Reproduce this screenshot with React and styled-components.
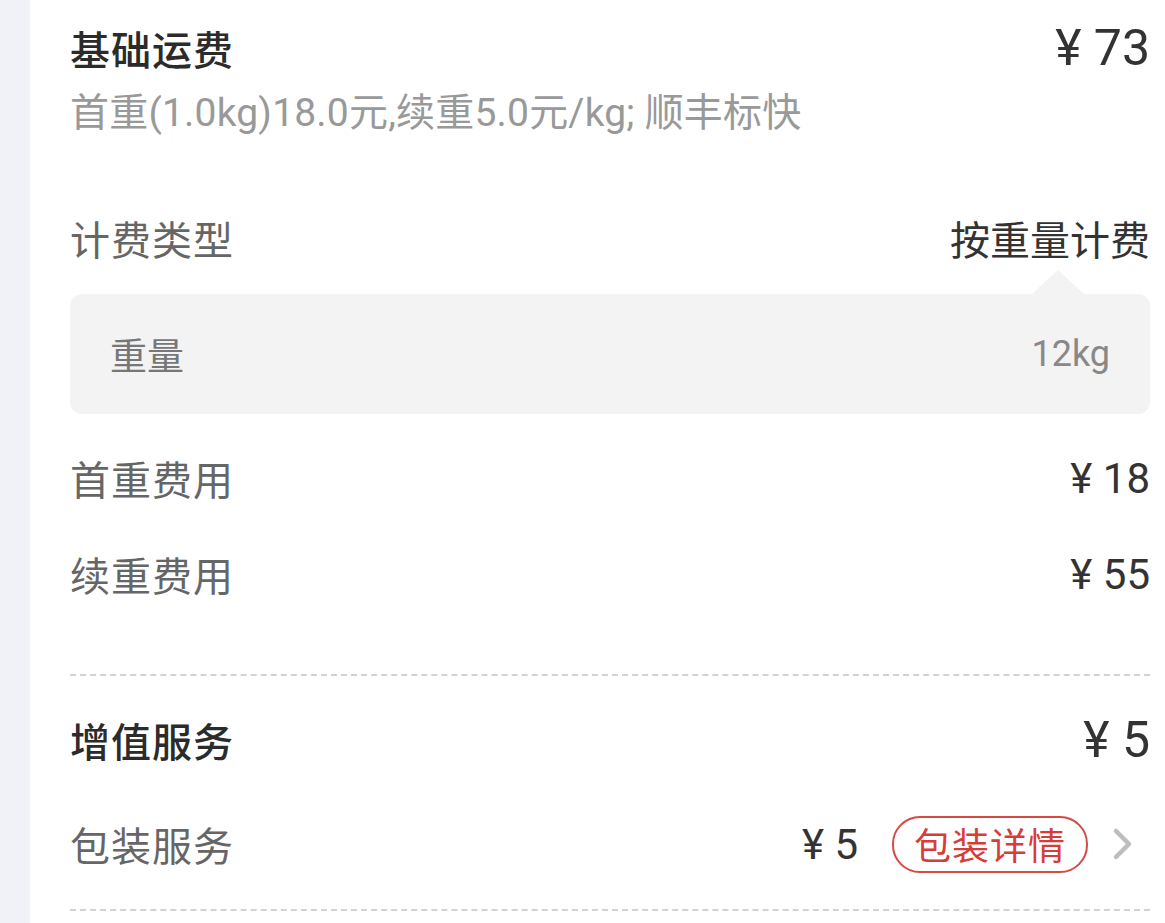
import React from "react";
import styled, { createGlobalStyle } from "styled-components";

const GlobalStyle = createGlobalStyle`
  html, body {
    margin: 0;
    padding: 0;
    background: #ffffff;
  }
  body {
    font-family: "Roboto", "Noto Sans CJK SC", sans-serif;
  }
`;

const Page = styled.div`
  display: flex;
  min-height: 923px;
`;

const SideStrip = styled.div`
  flex: 0 0 30px;
  background: #f0f2f7;
`;

const Content = styled.div`
  flex: 1;
  padding: 20px 15px 0 40px;
  display: flex;
  flex-direction: column;
`;

const Row = styled.div`
  display: flex;
  align-items: center;
  justify-content: space-between;
  height: ${(p) => p.$h || 96}px;
`;

const Title = styled.div`
  font-size: 40px;
  font-weight: 500;
  color: #2b2b2b;
  letter-spacing: 1px;
`;

const SubText = styled.div`
  font-size: 39px;
  letter-spacing: 0.2px;
  color: #999999;
  line-height: 50px;
  height: 50px;
  margin: 12px 0 52px;
`;

const Label = styled.div`
  font-size: 40px;
  color: #666666;
  letter-spacing: 1px;
`;

const Value = styled.div`
  font-size: ${(p) => p.$size || 40}px;
  color: ${(p) => p.$color || "#333333"};
  white-space: pre;
`;

const WeightBox = styled.div`
  position: relative;
  margin-top: 8px;
  height: 120px;
  background: #f3f3f3;
  border-radius: 12px;
  display: flex;
  align-items: center;
  justify-content: space-between;
  padding: 0 40px;
  margin-bottom: 16px;

  &::before {
    content: "";
    position: absolute;
    top: -24px;
    right: 66px;
    border-left: 26px solid transparent;
    border-right: 26px solid transparent;
    border-bottom: 24px solid #f3f3f3;
  }
`;

const BoxLabel = styled.div`
  font-size: 37px;
  color: #777777;
`;

const BoxValue = styled.div`
  font-size: 36px;
  color: #888888;
`;

const Dashed = styled.div`
  border-top: 2px dashed #d2d2d2;
  margin: ${(p) => p.$m || "0"};
`;

const RightGroup = styled.div`
  display: flex;
  align-items: center;
`;

const Pill = styled.div`
  margin-left: 34px;
  height: 53px;
  padding: 0 20px;
  border: 2px solid #d44a45;
  border-radius: 28px;
  display: flex;
  align-items: center;
  font-size: 37px;
  color: #d63d39;
  letter-spacing: 1px;
`;

const Chevron = styled.svg`
  margin-left: 24px;
  margin-right: 16px;
  width: 22px;
  height: 34px;
`;

export default function App() {
  return (
    <>
      <GlobalStyle />
      <Page>
        <SideStrip />
        <Content>
          <Row $h={56}>
            <Title>基础运费</Title>
            <Value $size={50}>¥ 73</Value>
          </Row>
          <SubText>首重(1.0kg)18.0元,续重5.0元/kg; 顺丰标快</SubText>

          <Row>
            <Label>计费类型</Label>
            <Value>按重量计费</Value>
          </Row>
          <WeightBox>
            <BoxLabel>重量</BoxLabel>
            <BoxValue>12kg</BoxValue>
          </WeightBox>

          <Row>
            <Label>首重费用</Label>
            <Value $size={42}>¥ 18</Value>
          </Row>
          <Row>
            <Label>续重费用</Label>
            <Value $size={42}>¥ 55</Value>
          </Row>

          <Dashed $m="52px 0 19px" />

          <Row $h={90}>
            <Title>增值服务</Title>
            <Value $size={50}>¥ 5</Value>
          </Row>
          <Row $h={118}>
            <Label>包装服务</Label>
            <RightGroup>
              <Value $size={42}>¥ 5</Value>
              <Pill>包装详情</Pill>
              <Chevron viewBox="0 0 22 34">
                <path d="M4 4 L17 17 L4 30" fill="none" stroke="#bdbdbd" strokeWidth="4.5" strokeLinecap="round" strokeLinejoin="round" />
              </Chevron>
            </RightGroup>
          </Row>
          <Dashed $m="6px 0 0" />
        </Content>
      </Page>
    </>
  );
}
